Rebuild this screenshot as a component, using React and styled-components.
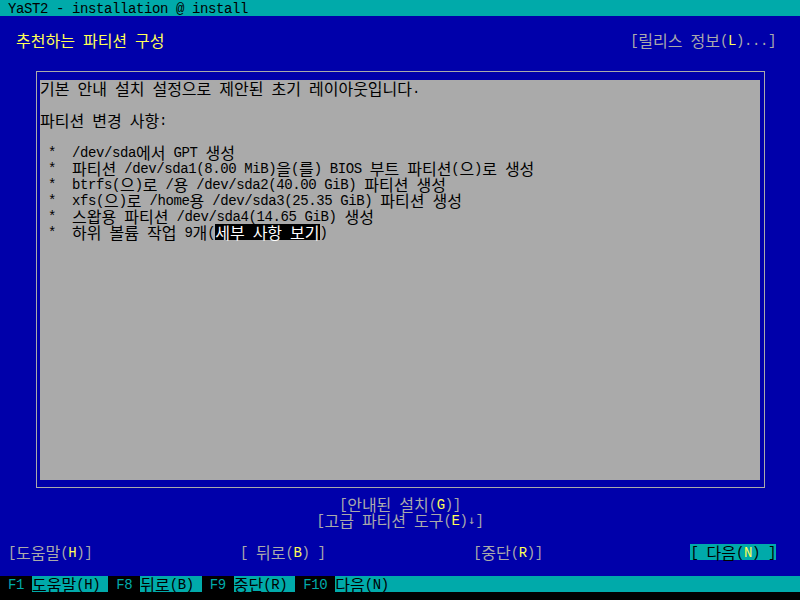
import React from "react";
import styled, { createGlobalStyle } from "styled-components";

const C = {
  black: "#000000",
  blue: "#0000aa",
  teal: "#00aaaa",
  gray: "#aaaaaa",
  yellow: "#ffff55",
  white: "#ffffff",
};

const Global = createGlobalStyle`
  *, *::before, *::after { box-sizing: border-box; }
  html, body { margin: 0; padding: 0; background: #000; }
`;

const Screen = styled.div`
  width: 800px;
  height: 600px;
  background: ${C.black};
  display: flex;
  flex-direction: column;
  font-family: "Liberation Mono", "DejaVu Sans Mono", monospace;
  font-size: 14px;
  letter-spacing: -0.4px;
  line-height: 18px;
  white-space: pre;
  overflow: hidden;
`;

const Wide = styled.span`
  display: inline-block;
  vertical-align: top;
  height: 16px;
  line-height: 16px;
  font-family: "Noto Sans CJK KR", "Noto Sans", sans-serif;
  font-size: 16px;
  letter-spacing: 0;
`;

const Arrow = styled.span`
  display: inline-block;
  vertical-align: top;
  width: 8px;
  height: 16px;
  line-height: 16px;
  letter-spacing: 0;
  overflow: hidden;
  font-family: "DejaVu Sans Mono", monospace;
  font-size: 12px;
  text-align: center;
`;

const HANGUL = /([\u1100-\u11FF\u3130-\u318F\uAC00-\uD7A3]+)/;
function Txt({ children }) {
  const s = String(children);
  return (
    <>
      {s.split(HANGUL).map((part, i) =>
        i % 2 === 1 ? <Wide key={i}>{part}</Wide> : <React.Fragment key={i}>{part}</React.Fragment>
      )}
    </>
  );
}

const TitleBar = styled.div`
  height: 16px;
  background: ${C.teal};
  color: ${C.black};
  padding-left: 8px;
`;

const Desk = styled.div`
  height: 560px;
  background: ${C.blue};
  color: ${C.gray};
  display: flex;
  flex-direction: column;
`;

const Header = styled.div`
  margin-top: 16px;
  height: 16px;
  display: flex;
  justify-content: space-between;
  padding: 0 24px 0 16px;
`;

const Heading = styled.span`
  color: ${C.yellow};
`;

const Hot = styled.span`
  color: ${C.yellow};
`;

const FrameCell = styled.div`
  margin: 16px 32px 0;
  height: 432px;
  padding: 7px 3px 8px 4px;
`;

const FrameBox = styled.div`
  height: 100%;
  border: 1px solid ${C.gray};
  padding: 8px 4px 7px 3px;
`;

const Pane = styled.div`
  height: 100%;
  background: ${C.gray};
  color: ${C.black};
  display: flex;
  flex-direction: column;
`;

const Line = styled.div`
  height: 16px;
`;

const Blank = styled.div`
  height: 16px;
`;

const Highlight = styled.span`
  display: inline-block;
  vertical-align: top;
  height: 16px;
  background: ${C.black};
  color: ${C.white};
`;

const CenterRow = styled.div`
  height: 16px;
  text-align: center;
`;

const ButtonRow = styled.div`
  margin-top: 16px;
  height: 16px;
  display: flex;
  justify-content: space-between;
  padding: 0 24px 0 8px;
`;

const Btn = styled.span`
  display: inline-block;
  height: 16px;
  background: ${(p) => (p.$focused ? C.teal : "transparent")};
  color: ${(p) => (p.$focused ? C.black : C.gray)};
`;

const FKeyBar = styled.div`
  height: 16px;
  display: flex;
  background: ${C.black};
`;

const FKey = styled.span`
  height: 16px;
  color: ${C.teal};
  background: ${C.black};
`;

const FLabel = styled.span`
  height: 16px;
  color: ${C.black};
  background: ${C.teal};
  flex: ${(p) => (p.$fill ? 1 : "none")};
`;

const changes = [
  "/dev/sda에서 GPT 생성",
  "파티션 /dev/sda1(8.00 MiB)을(를) BIOS 부트 파티션(으)로 생성",
  "btrfs(으)로 /용 /dev/sda2(40.00 GiB) 파티션 생성",
  "xfs(으)로 /home용 /dev/sda3(25.35 GiB) 파티션 생성",
  "스왑용 파티션 /dev/sda4(14.65 GiB) 생성",
];

const fkeys = [
  ["F1", "도움말(H) "],
  ["F8", "뒤로(B) "],
  ["F9", "중단(R) "],
  ["F10", "다음(N) "],
];

export default function App() {
  return (
    <>
      <Global />
      <Screen>
        <TitleBar>YaST2 - installation @ install</TitleBar>
        <Desk>
          <Header>
            <Heading>
              <Txt>추천하는 파티션 구성</Txt>
            </Heading>
            <span>
              [<Txt>릴리스 정보</Txt>(<Hot>L</Hot>)...]
            </span>
          </Header>
          <FrameCell>
            <FrameBox>
              <Pane>
                <Line>
                  <Txt>기본 안내 설치 설정으로 제안된 초기 레이아웃입니다.</Txt>
                </Line>
                <Blank />
                <Line>
                  <Txt>파티션 변경 사항:</Txt>
                </Line>
                <Blank />
                {changes.map((c) => (
                  <Line key={c}>
                    {" *  "}
                    <Txt>{c}</Txt>
                  </Line>
                ))}
                <Line>
                  {" *  "}
                  <Txt>하위 볼륨 작업 9개(</Txt>
                  <Highlight>
                    <Txt>세부 사항 보기</Txt>
                  </Highlight>
                  )
                </Line>
              </Pane>
            </FrameBox>
          </FrameCell>
          <CenterRow>
            [<Txt>안내된 설치</Txt>(<Hot>G</Hot>)]
          </CenterRow>
          <CenterRow>
            [<Txt>고급 파티션 도구</Txt>(<Hot>E</Hot>)<Arrow>↓</Arrow>]
          </CenterRow>
          <ButtonRow>
            <Btn>
              [<Txt>도움말</Txt>(<Hot>H</Hot>)]
            </Btn>
            <Btn>
              [ <Txt>뒤로</Txt>(<Hot>B</Hot>) ]
            </Btn>
            <Btn>
              [<Txt>중단</Txt>(<Hot>R</Hot>)]
            </Btn>
            <Btn $focused>
              [ <Txt>다음</Txt>(<Hot>N</Hot>) ]
            </Btn>
          </ButtonRow>
        </Desk>
        <FKeyBar>
          {fkeys.map(([k, label], i) => (
            <React.Fragment key={k}>
              <FKey>{` ${k} `}</FKey>
              <FLabel $fill={i === fkeys.length - 1}>
                <Txt>{label}</Txt>
              </FLabel>
            </React.Fragment>
          ))}
        </FKeyBar>
      </Screen>
    </>
  );
}
